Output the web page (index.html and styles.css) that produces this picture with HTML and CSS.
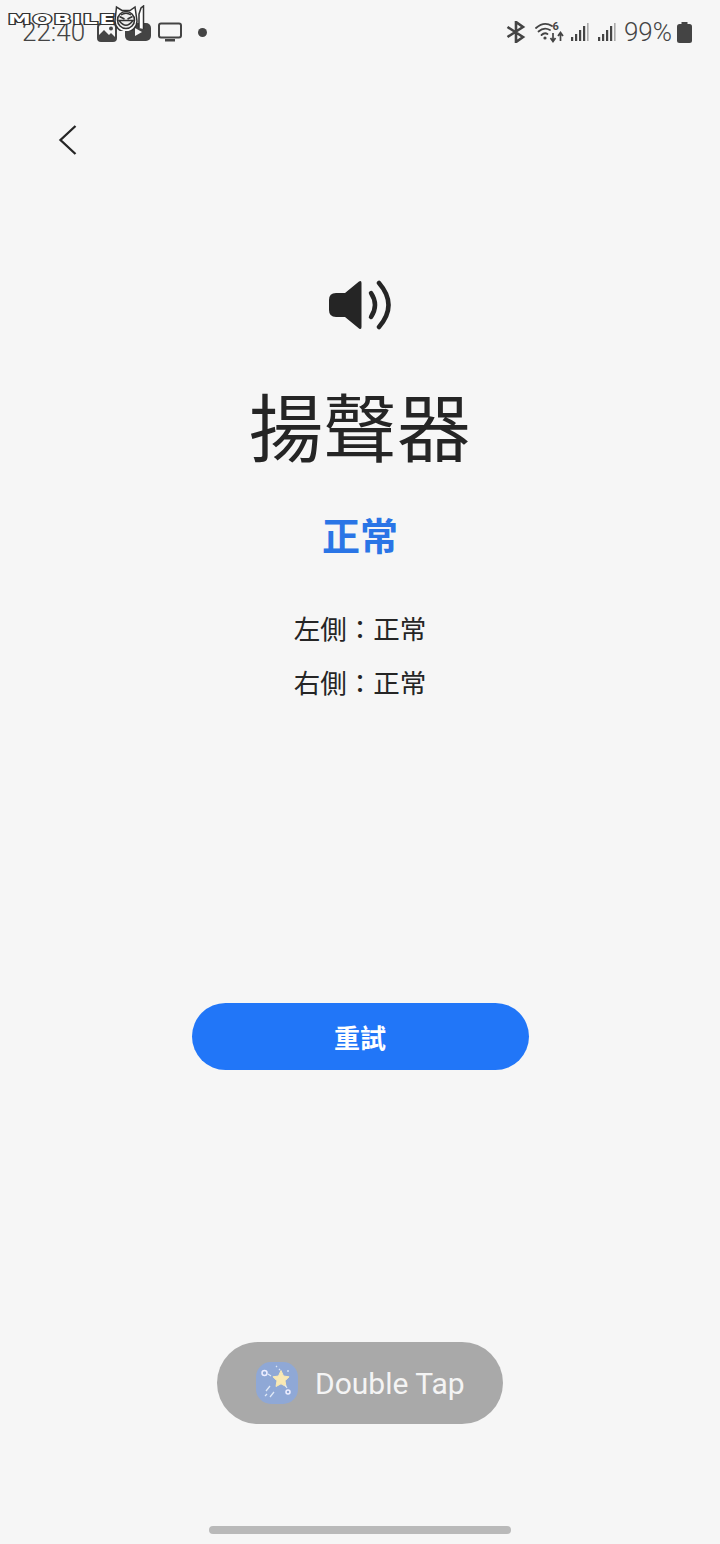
FILE: index.html
```html
<!DOCTYPE html>
<html lang="zh-Hant">
<head>
	<title>揚聲器</title>
	<meta charset="utf-8">
	<link rel="stylesheet" href="styles.css">
</head>
<body>
<div class="screen">
	<header class="status-bar">
		<div class="status-left">
			<span class="clock">22:40</span>
			<svg class="st-icon" width="22" height="20" viewBox="0 0 22 20">
				<rect x="2" y="2" width="18" height="17" rx="3" fill="none" stroke="#444" stroke-width="2"/>
				<circle cx="15" cy="6.500" r="2" fill="#444"/>
				<path d="M3 17 L3 13 L8 8 L13 13 L15 11 L19 15 L19 18 L3 18 Z" fill="#444"/>
			</svg>
			<svg class="st-icon" width="26" height="20" viewBox="0 0 26 20">
				<rect x="0" y="1" width="26" height="18" rx="5" fill="#444"/>
				<path d="M10 6 L10 14 L17 10 Z" fill="#f6f6f6"/>
			</svg>
			<svg class="st-icon" width="24" height="20" viewBox="0 0 24 20">
				<rect x="1" y="1.500" width="22" height="14" rx="2" fill="none" stroke="#444" stroke-width="2"/>
				<rect x="7" y="17" width="10" height="2.500" fill="#444"/>
			</svg>
			<span class="dot"></span>
		</div>
		<div class="status-right">
			<svg class="bt" width="20" height="22" viewBox="0 0 20 22">
				<path d="M1.500 6 L17 16 L10 21 L10 1 L17 6 L1.500 16" fill="none" stroke="#444" stroke-width="2.600"/>
			</svg>
			<svg class="wifi" width="29" height="22" viewBox="0 0 29 22">
				<g fill="none" stroke="#444" stroke-width="1.800" stroke-linecap="round">
					<path d="M1 7 Q9 0 17 5"/>
					<path d="M3.500 10.500 Q9 5.500 15 9"/>
					<path d="M6.500 14 Q9.500 11 12.500 13"/>
				</g>
				<circle cx="10" cy="17" r="1.600" fill="#444"/>
				<text x="17.500" y="9" class="wifi-six">6</text>
				<path d="M18 12 L18 20 M15.500 17 L18 20.500 L20.500 17 M25.500 20 L25.500 12 M23 15 L25.500 11.500 L28 15" fill="none" stroke="#444" stroke-width="1.700"/>
			</svg>
			<svg class="signal" width="18" height="20" viewBox="0 0 18 20">
				<rect x="0" y="15" width="2.200" height="4" fill="#444"/>
				<rect x="4" y="12" width="2.200" height="7" fill="#444"/>
				<rect x="8" y="8" width="2.200" height="11" fill="#444"/>
				<rect x="12" y="4" width="2.200" height="15" fill="#444"/>
				<rect x="16" y="1" width="1.600" height="18" fill="#aaa"/>
			</svg>
			<svg class="signal" width="18" height="20" viewBox="0 0 18 20">
				<rect x="0" y="15" width="2.200" height="4" fill="#444"/>
				<rect x="4" y="12" width="2.200" height="7" fill="#444"/>
				<rect x="8" y="8" width="2.200" height="11" fill="#444"/>
				<rect x="12" y="4" width="2.200" height="15" fill="#444"/>
				<rect x="16" y="1" width="1.600" height="18" fill="#aaa"/>
			</svg>
			<span class="battery-text">99%</span>
			<svg class="battery" width="15" height="21" viewBox="0 0 15 21">
				<rect x="4.500" y="0" width="6" height="3" fill="#444"/>
				<rect x="0" y="2" width="15" height="19" rx="2.500" fill="#444"/>
			</svg>
		</div>
	</header>

	<div class="nav">
		<svg width="20" height="32" viewBox="0 0 20 32">
			<path d="M17.500 2 L2.500 16 L17.500 30" fill="none" stroke="#252525" stroke-width="2.300"/>
		</svg>
	</div>

	<main class="result">
		<svg class="speaker" width="64" height="50" viewBox="0 0 64 50">
			<path d="M8 13 L17 13 L31 1.500 Q33.500 0 33.500 3 L33.500 47 Q33.500 50 31 48.500 L17 37 L8 37 Q1 37 1 30 L1 20 Q1 13 8 13 Z" fill="#252525"/>
			<path d="M43 13 Q51 25 43 37" fill="none" stroke="#252525" stroke-width="4.500" stroke-linecap="round"/>
			<path d="M51 3 Q70 25 51 47" fill="none" stroke="#252525" stroke-width="4.500" stroke-linecap="round"/>
		</svg>
		<h1 class="title">揚聲器</h1>
		<p class="state">正常</p>
		<p class="side first">左側：正常</p>
		<p class="side">右側：正常</p>
		<button class="retry">重試</button>
	</main>

	<div class="bottom">
		<div class="double-tap">
			<svg width="44" height="44" viewBox="0 0 44 44">
				<rect x="1" y="1" width="42" height="42" rx="15" fill="#8fa8d6"/>
				<path d="M26 9.500 L28.500 15 L34 15.800 L30 19.800 L31 25.500 L26 22.800 L21 25.500 L22 19.800 L18 15.800 L23.500 15 Z" fill="#f9e9b4" stroke="#f9e9b4" stroke-linejoin="round"/>
				<circle cx="9.500" cy="12" r="2.500" fill="none" stroke="#eef" stroke-width="1.500"/>
				<circle cx="33" cy="31" r="2" fill="none" stroke="#eef" stroke-width="1.500"/>
				<g stroke="#dfe8f6" stroke-width="1.300" fill="none">
					<path d="M21 5 L22 6 M24 8 L25 9 M13 13 L16 15 M30 24 L32 27 M33 9 L33 11"/>
					<path d="M15 25 L11 30 M19 31 L15 36 M12 33 L10 35"/>
				</g>
			</svg>
			<span class="tap-label">Double Tap</span>
		</div>
		<div class="home-bar"></div>
	</div>

	<!-- watermark over the status bar -->
	<div class="watermark">
		<span class="wm-text">MOBILE</span>
		<svg class="wm-logo" width="32" height="26" viewBox="0 0 32 26">
			<path d="M26 23 L26 9 L28 3 L30.500 1 L30.500 24" fill="#fff" stroke="#333" stroke-width="1.500"/>
			<path d="M2 16 L3.500 2 L9 5.500 L17 5.500 L22 2 L24 16 A11 11 0 1 1 2 16 Z" fill="#fff" stroke="#333" stroke-width="1.500"/>
			<circle cx="13" cy="15" r="8.500" fill="#eee" stroke="#333" stroke-width="1.600"/>
			<path d="M6.500 11.500 L11.500 14 M19.500 11.500 L14.500 14 M6 15.500 L20 15.500 Q13 25 6 15.500 Z M8 10 Q13 6.500 18 10" fill="none" stroke="#333" stroke-width="1.400"/>
		</svg>
	</div>
</div>
</body>
</html>
```

FILE: styles.css
```css
body { margin: 0; background: #f6f6f6; }

.screen {
	position: relative;
	width: 720px;
	height: 1544px;
	overflow: hidden;
	display: flex;
	flex-direction: column;
	font-family: "Noto Sans CJK TC", "Noto Sans", sans-serif;
	color: #252525;
}

/* watermark */
.watermark {
	position: absolute;
	left: 8px;
	top: 5px;
	display: flex;
	align-items: flex-start;
}
.wm-text {
	width: 105px;
	margin-top: 3px;
	font-family: "DejaVu Sans", sans-serif;
	font-size: 14px;
	font-weight: bold;
	letter-spacing: 1px;
	line-height: 22px;
	color: #fff;
	-webkit-text-stroke: 2px #333;
	paint-order: stroke fill;
	transform-origin: left center;
	transform: scaleX(1.64);
}

/* status bar */
.status-bar {
	height: 62px;
	padding: 2px 28px 0 22px;
	box-sizing: border-box;
	display: flex;
	justify-content: space-between;
	align-items: center;
	flex-shrink: 0;
}
.status-left, .status-right { display: flex; align-items: center; }
.status-left { gap: 7px; }
.clock {
	font-family: Roboto, sans-serif;
	font-size: 26px;
	font-weight: 300;
	color: #444;
	width: 67px;
}
.dot {
	width: 9px;
	height: 9px;
	margin-left: 9px;
	border-radius: 50%;
	background: #444;
}
.battery-text {
	margin-left: 8px;
	font-family: Roboto, sans-serif;
	font-size: 26px;
	font-weight: 300;
	color: #444;
}
.wifi { margin-left: 9px; }
.signal { margin-left: 7px; }
.signal + .signal { margin-left: 9px; }
.battery { margin-left: 5px; }
.wifi-six {
	font-family: Roboto, sans-serif;
	font-size: 11px;
	font-weight: bold;
	fill: #444;
}

/* back button */
.nav {
	height: 56px;
	margin-top: 50px;
	padding-left: 58px;
	display: flex;
	align-items: center;
	flex-shrink: 0;
}

.result {
	display: flex;
	flex-direction: column;
	align-items: center;
	padding-top: 112px;
}
.title {
	margin: 46px 0 0;
	font-size: 74px;
	font-weight: 400;
	line-height: 96px;
}
.state {
	margin: 37px 0 0;
	font-size: 38px;
	font-weight: 700;
	line-height: 50px;
	color: #2a75e6;
}
.side {
	margin: 0;
	font-size: 26.500px;
	line-height: 54px;
	height: 54px;
}
.side.first { margin-top: 42px; }
.retry {
	margin-top: 294px;
	width: 337px;
	height: 67px;
	border: 0;
	border-radius: 34px;
	background: #2176f8;
	color: #fff;
	font-family: "Noto Sans CJK TC", sans-serif;
	font-size: 26px;
	font-weight: 700;
}

.bottom {
	margin-top: auto;
	display: flex;
	flex-direction: column;
	align-items: center;
	padding-bottom: 10px;
}
.double-tap {
	width: 286px;
	height: 82px;
	box-sizing: border-box;
	padding-left: 38px;
	display: flex;
	align-items: center;
	gap: 16px;
	border-radius: 41px;
	background: #a9a9a9;
}
.tap-label {
	font-family: Roboto, sans-serif;
	font-size: 30px;
	color: #f4f4f4;
}
.home-bar {
	margin-top: 102px;
	width: 302px;
	height: 8px;
	border-radius: 4px;
	background: #b9b9b9;
}
```
